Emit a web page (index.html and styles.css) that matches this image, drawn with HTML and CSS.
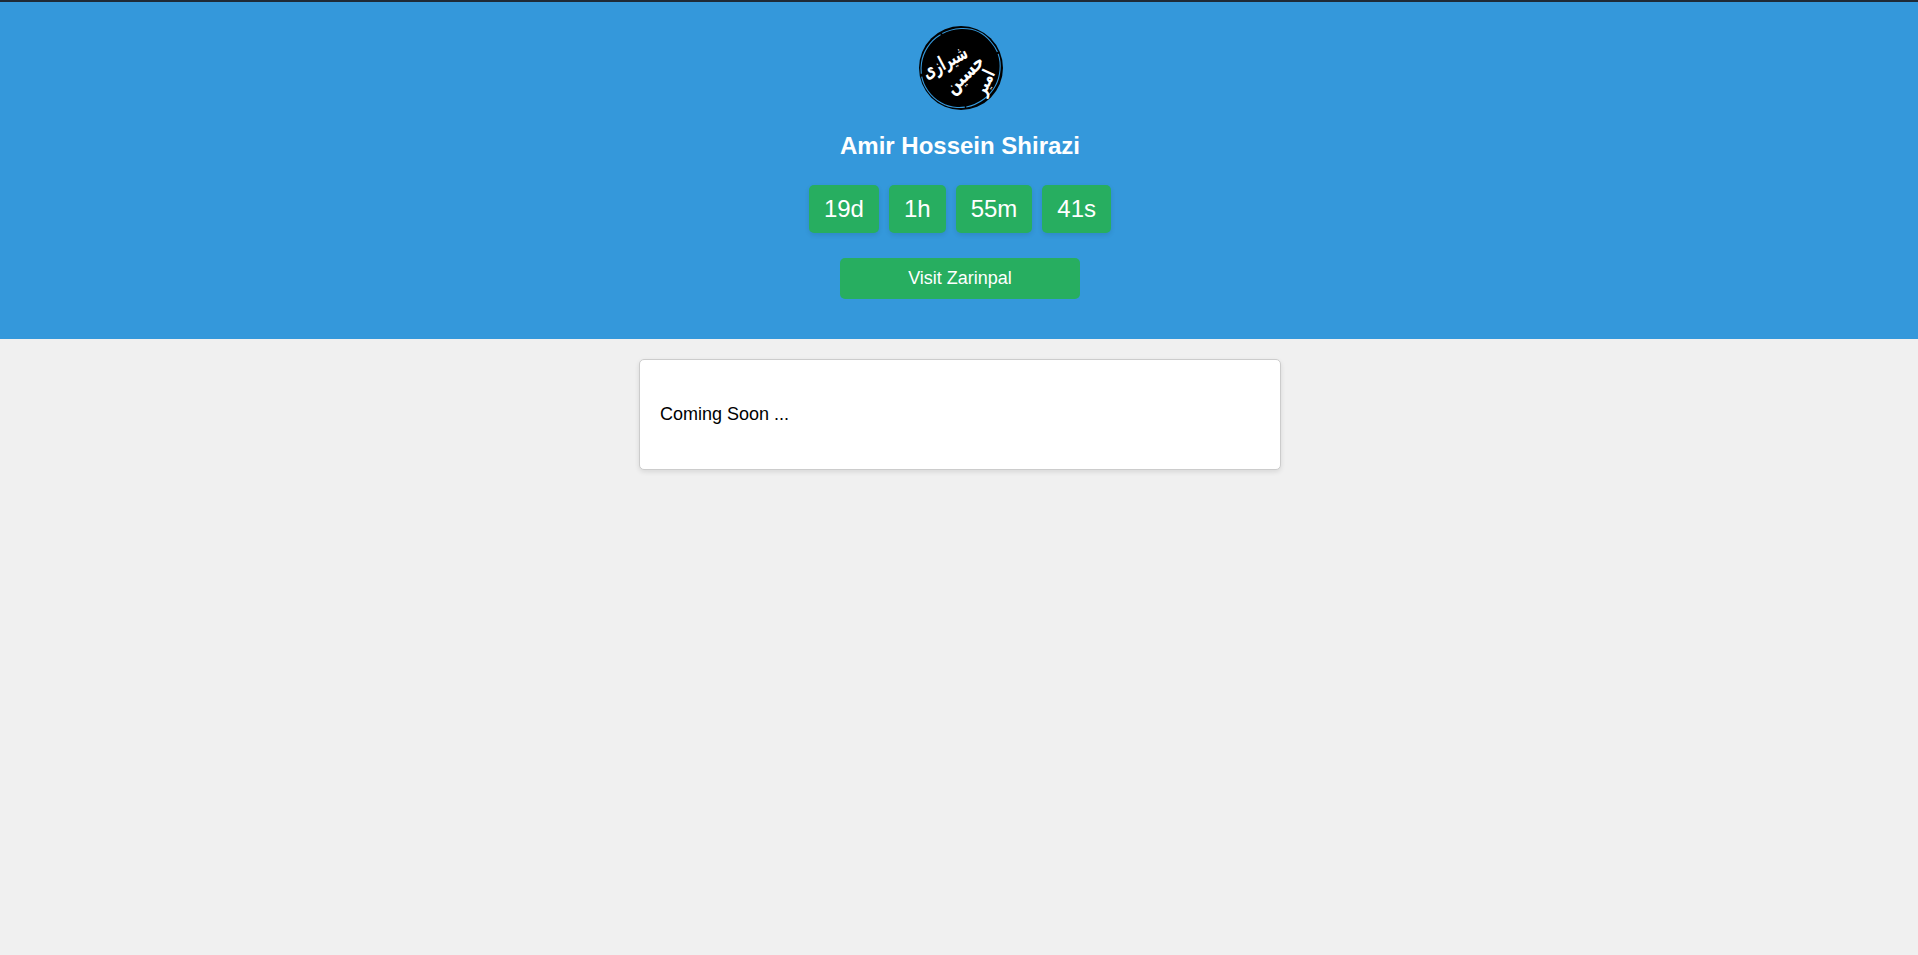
FILE: index.html
```html
<!DOCTYPE html>
<html lang="en">
<head>
<meta charset="utf-8">
<title>Amir Hossein Shirazi</title>
<link rel="stylesheet" href="styles.css">
</head>
<body>
<header class="hero">
  <svg class="logo" viewBox="0 0 84 84" width="84" height="84" aria-label="Logo">
    <circle cx="43" cy="42" r="42" fill="#000"/>
    <path class="logo-ring" d="M43 2.5C55 2 66 7 73 16C80 24 83 33 82 44C81 56 75 66 66 73C58 79 49 82 39 81.5C28 81 17 75 10 65C4 57 2 47 3.5 37C5 26 12 15 22 9C28 5 35 3 43 2.5Z"/>
    <text class="logo-text logo-first" x="0" y="0" transform="translate(30 42) rotate(-28)" text-anchor="middle" textLength="48" lengthAdjust="spacingAndGlyphs">شیرازی</text>
    <text class="logo-text logo-second" x="0" y="0" transform="translate(51 53) rotate(-44)" text-anchor="middle" textLength="46" lengthAdjust="spacingAndGlyphs">حسین</text>
    <text class="logo-text logo-third" x="0" y="0" transform="translate(72 59) rotate(-65)" text-anchor="middle" textLength="26" lengthAdjust="spacingAndGlyphs">امیر</text>
  </svg>
  <h1 class="name">Amir Hossein Shirazi</h1>
  <div class="timer">
    <span class="tile">19d</span>
    <span class="tile">1h</span>
    <span class="tile">55m</span>
    <span class="tile">41s</span>
  </div>
  <a class="visit" href="#">Visit Zarinpal</a>
</header>
<main class="content">
  <section class="card">
    <p class="card-text">Coming Soon ...</p>
  </section>
</main>
</body>
</html>
```
FILE: styles.css
```css
* { box-sizing: border-box; }
html, body { margin: 0; padding: 0; }
html { overflow-x: hidden; }
body {
  width: 1920px;
  min-height: 955px;
  background: #f0f0f0;
  color: #000;
  font-family: "Liberation Sans", Arial, sans-serif;
  border-top: 2px solid #1f2a36;
}
.hero {
  height: 337px;
  padding-top: 24px;
  background: #3498db;
  color: #fff;
  display: flex;
  flex-direction: column;
  align-items: center;
}
.logo { display: block; overflow: visible; }
.logo-ring {
  fill: none;
  stroke: #3498db;
  stroke-width: 1.1;
  stroke-dasharray: 46 2 70 1.5 58 3;
}
.logo-text {
  font-family: "DejaVu Sans", sans-serif;
  font-weight: bold;
  fill: #fff;
}
.logo-first { font-size: 20px; }
.logo-second { font-size: 20px; }
.logo-third { font-size: 18px; }
.name {
  margin: 22px 0 0;
  font-size: 24px;
  line-height: 28px;
  font-weight: bold;
}
.timer {
  display: flex;
  gap: 10px;
  margin-top: 25px;
}
.tile {
  padding: 10px 15px;
  background: #27ae60;
  border-radius: 5px;
  font-size: 24px;
  line-height: 28px;
  box-shadow: 0 2px 5px rgba(0, 0, 0, 0.1);
}
.visit {
  width: 240px;
  height: 41px;
  margin-top: 25px;
  background: #27ae60;
  border-radius: 5px;
  color: #fff;
  font-size: 18px;
  line-height: 41px;
  text-align: center;
  text-decoration: none;
}
.content {
  display: flex;
  justify-content: center;
  padding-top: 20px;
}
.card {
  width: 642px;
  height: 111px;
  padding: 0 20px;
  background: #fff;
  border: 1px solid #ccc;
  border-radius: 5px;
  box-shadow: 0 2px 5px rgba(0, 0, 0, 0.1);
  display: flex;
  align-items: center;
}
.card-text {
  margin: 0;
  font-size: 18px;
}
```
